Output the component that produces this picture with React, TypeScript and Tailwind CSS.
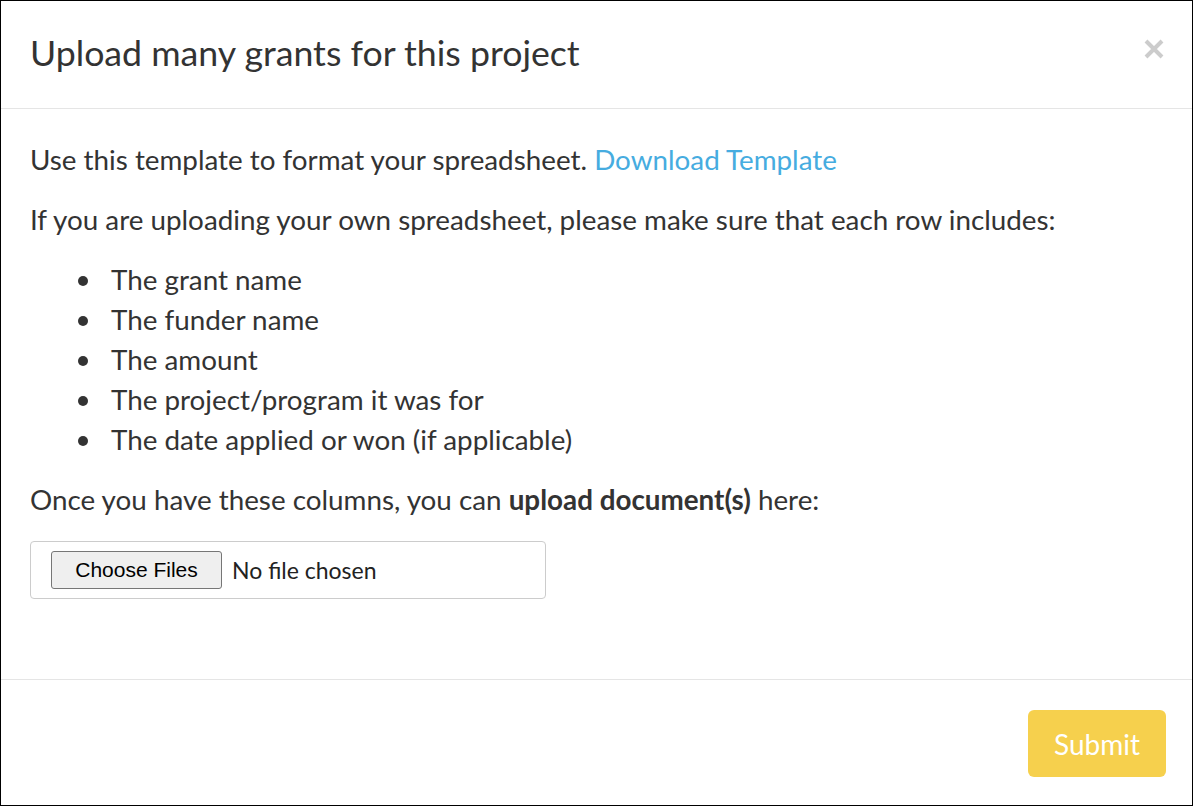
import React from 'react';

const ITEMS = [
  'The grant name',
  'The funder name',
  'The amount',
  'The project/program it was for',
  'The date applied or won (if applicable)',
];

export default function App() {
  return (
    <div
      className="w-[1193px] h-[806px] bg-white border border-black flex flex-col text-[#333]"
      style={{ fontFamily: 'Lato, "Open Sans", sans-serif' }}
    >
      {/* header */}
      <div className="h-[108px] shrink-0 pl-[29px] pr-[28px] flex items-center justify-between border-b border-[#e5e5e5]">
        <h4 className="text-[35.7px] leading-none -mt-[4px]">Upload many grants for this project</h4>
        <button className="-mt-[12px]" aria-label="Close">
          <svg width="20" height="20" viewBox="0 0 20 20">
            <path d="M2 2 L18 18 M18 2 L2 18" stroke="#cccccc" strokeWidth="4" />
          </svg>
        </button>
      </div>

      {/* body */}
      <div className="flex-1 px-[29px] pt-[31px] text-[27.8px] leading-[40px]">
        <p>
          Use this template to format your spreadsheet.{' '}
          <a className="text-[#46ace0]" href="#">Download Template</a>
        </p>
        <p className="mt-[20px]">
          If you are uploading your own spreadsheet, please make sure that each row includes:
        </p>
        <ul className="mt-[20px] pl-[48px]">
          {ITEMS.map((item) => (
            <li key={item} className="flex items-center">
              <span className="w-[10px] h-[10px] rounded-full bg-[#333] mr-[23px] mt-[2px] shrink-0" />
              {item}
            </li>
          ))}
        </ul>
        <p className="mt-[20px]">
          Once you have these columns, you can <b>upload document(s)</b> here:
        </p>
        <div className="mt-[21px] w-[516px] h-[58px] border border-[#cccccc] rounded-[4px] flex items-center pl-[20px]">
          <span
            className="h-[38px] w-[171px] flex items-center justify-center bg-[#efefef] border border-[#767676] rounded-[3px] text-[21px] text-black"
            style={{ fontFamily: '"Liberation Sans", Arial, sans-serif' }}
          >
            Choose Files
          </span>
          <span className="ml-[10px] text-[23px] leading-none text-[#222]">No file chosen</span>
        </div>
      </div>

      {/* footer */}
      <div className="h-[126px] shrink-0 border-t border-[#e5e5e5] flex justify-end items-start pt-[30px] pr-[26px]">
        <button className="w-[138px] h-[67px] rounded-[6px] bg-[#f6d04d] text-white text-[28px]">
          Submit
        </button>
      </div>
    </div>
  );
}
